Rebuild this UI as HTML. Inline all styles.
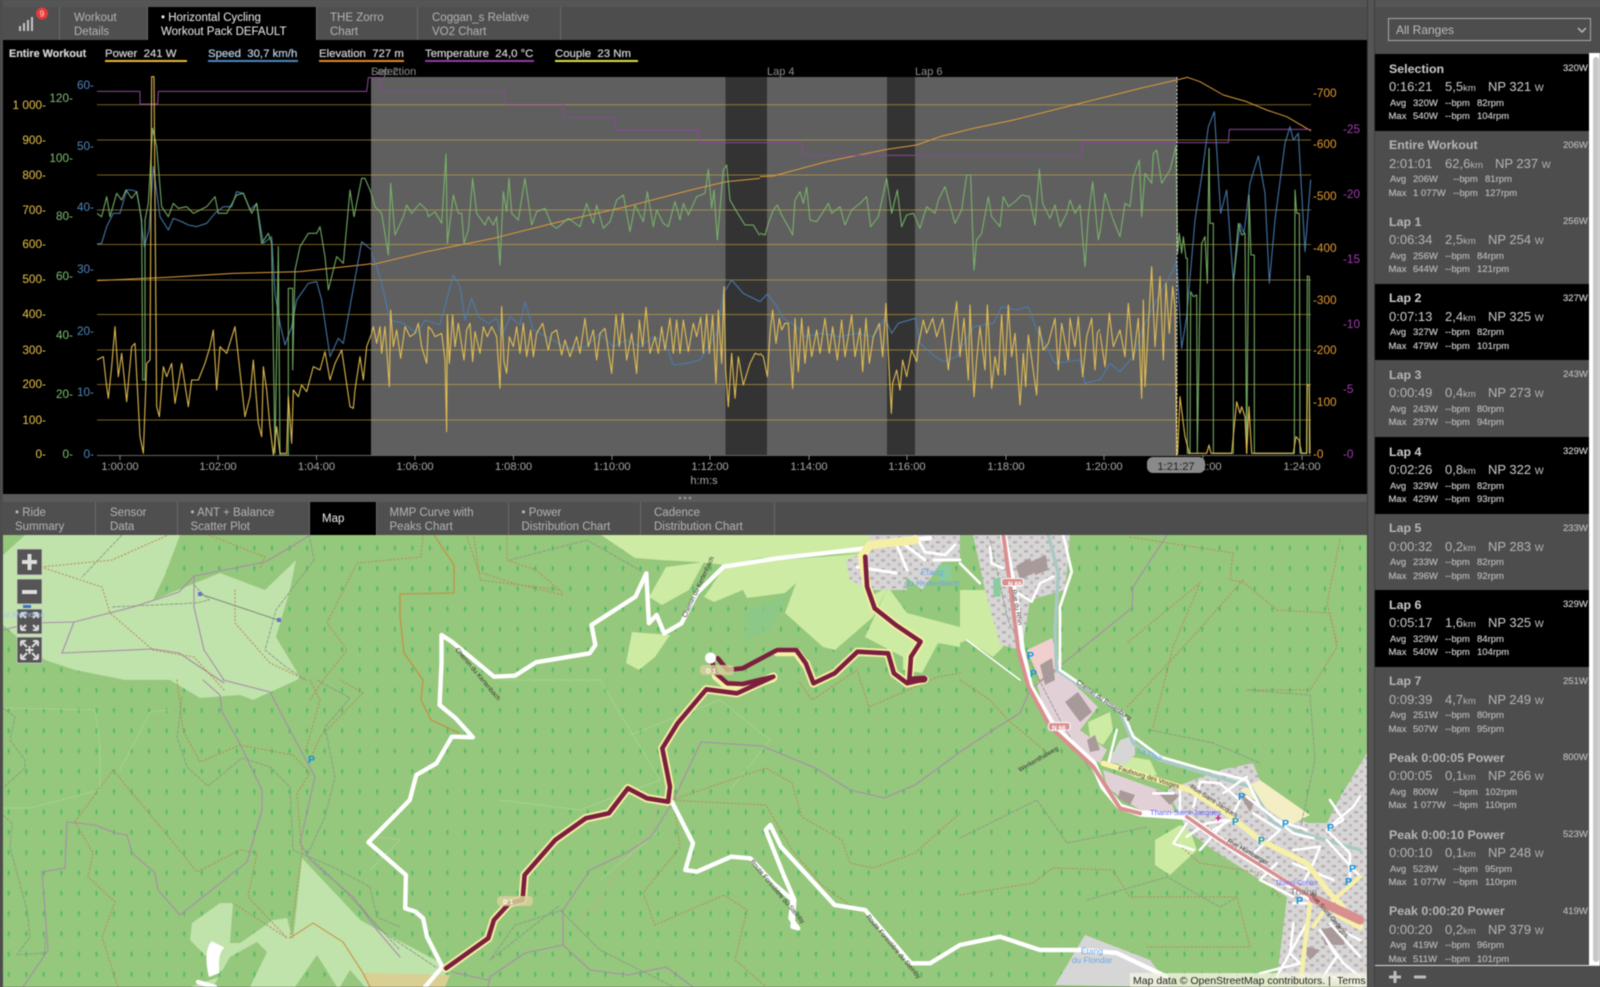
<!DOCTYPE html>
<html><head><meta charset="utf-8"><title>Workout</title>
<style>
html,body{margin:0;padding:0;background:#4d4d4d}
#root{position:relative;width:1600px;height:987px;overflow:hidden;background:#4d4d4d;font-family:"Liberation Sans",sans-serif;filter:blur(.4px)}
#root div,#root span{position:absolute;white-space:pre}
svg{position:absolute;left:0;top:0}
polyline,path,line,polygon,rect{vector-effect:non-scaling-stroke}
polyline{fill:none;stroke-linejoin:round;stroke-linecap:round}
.pw polyline{stroke:#eec654;stroke-width:1.1;stroke-opacity:.92}
.gr polyline{stroke:#7cb96c;stroke-width:1.1;stroke-opacity:.9}
.bl polyline{stroke:#4a80b6;stroke-width:1.1;stroke-opacity:.9}
.el polyline{stroke:#e09a38;stroke-width:1}
.tm polyline{stroke:#8b4899;stroke-width:1}
.tab{top:7px;height:33px;background:#4f4f4f;border-right:1px solid #6a6a6a;box-sizing:border-box;color:#b4b4b4;font-size:11.5px;line-height:14px}
.btab{top:502px;height:33px;background:#4f4f4f;border-right:1px solid #6a6a6a;box-sizing:border-box;color:#b4b4b4;font-size:11.5px;line-height:14px}
.act{background:#000;color:#eee}
.l1{top:3.5px}.l2{top:17.5px}
.lg{top:47px;font-size:11.4px;line-height:14px;color:#d6d6d6;height:14px;text-shadow:0 0 .5px #d6d6d6}
.ul{top:60px;height:1.6px}
.ax{font-size:11.8px;text-anchor:end}
.r{left:1375px;width:214px;height:76.6px;color:#b6b6b6;overflow:hidden}
.b{background:#000;color:#cdcdcd}
.r span{line-height:14px}
.t{left:14px;top:7.6px;font-weight:bold;font-size:12.4px}
.d{top:26px;font-size:13px}
.d i{font-style:normal;font-size:9.5px}
.s{font-size:9.5px;text-shadow:0 0 .4px #b6b6b6}
.a{top:42.6px}.m{top:56px}
svg text{font-family:"Liberation Sans",sans-serif}
.bd{stroke:#b98a55;stroke-width:1;stroke-dasharray:1.3 2.4;fill:none}
.dg{stroke:#8a9a88;stroke-width:.9;stroke-dasharray:3 1.8;fill:none}
.pu{stroke:#a88cab;stroke-width:1.1;fill:none}
.rl{font-size:6.5px;fill:#333}
</style></head><body>
<div id="root">

<!-- top tabs -->
<div style="left:0;top:0;width:1368px;height:7px;background:#555"></div>
<div class="tab" style="left:3px;width:57px">
 <svg width="57" height="33" style="left:0;top:0"><g fill="#c4c4c4"><rect x="16" y="19" width="2" height="5"/><rect x="20" y="16" width="2" height="8"/><rect x="24" y="13" width="2" height="11"/><rect x="28" y="10" width="2" height="14"/></g><circle cx="39" cy="6.5" r="6" fill="#e23b3b"/><text x="39" y="9.5" font-size="8.5" fill="#fbdede" text-anchor="middle">9</text></svg>
</div>
<div class="tab" style="left:60px;width:88px"><span class="l1" style="left:14px">Workout</span><span class="l2" style="left:14px">Details</span></div>
<div class="tab act" style="left:148px;width:169px"><span class="l1" style="left:13px">• Horizontal Cycling</span><span class="l2" style="left:13px">Workout Pack DEFAULT</span></div>
<div class="tab" style="left:317px;width:101px"><span class="l1" style="left:13px">THE Zorro</span><span class="l2" style="left:13px">Chart</span></div>
<div class="tab" style="left:418px;width:143px"><span class="l1" style="left:14px">Coggan_s Relative</span><span class="l2" style="left:14px">VO2 Chart</span></div>

<!-- chart black -->
<div style="left:3px;top:40px;width:1364px;height:454px;background:#000"></div>

<!-- legend -->
<div class="lg" style="left:9px;font-weight:bold;font-size:10.8px">Entire Workout</div>
<div class="lg" style="left:105px">Power&nbsp; 241 W</div><div class="ul" style="left:105px;width:82px;background:#e8b830"></div>
<div class="lg" style="left:208px;color:#bcd3ea;text-shadow:0 0 .5px #bcd3ea">Speed&nbsp; 30,7 km/h</div><div class="ul" style="left:208px;width:90px;background:#4f86bd"></div>
<div class="lg" style="left:319px">Elevation&nbsp; 727 m</div><div class="ul" style="left:319px;width:85px;background:#e08a20"></div>
<div class="lg" style="left:425px">Temperature&nbsp; 24,0 °C</div><div class="ul" style="left:425px;width:109px;background:#8f3fa0"></div>
<div class="lg" style="left:555px">Couple&nbsp; 23 Nm</div><div class="ul" style="left:555px;width:83px;background:#dfe040"></div>

<svg width="1600" height="987" viewBox="0 0 1600 987">
<defs>
<clipPath id="c1"><rect x="97" y="60" width="274" height="396"/></clipPath>
<clipPath id="c2"><rect x="371" y="60" width="389" height="396"/></clipPath>
<clipPath id="c3"><rect x="760" y="60" width="340" height="396"/></clipPath>
<clipPath id="c4"><rect x="1100" y="60" width="212" height="396"/></clipPath>
<clipPath id="mp"><rect x="3" y="535" width="1364" height="452"/></clipPath>
<pattern id="tree" patternUnits="userSpaceOnUse" width="17.55" height="20.3" x="7.2" y="687"><path d="M1.5 0L3 3.6H2.1V6H.9V3.6H0Z" fill="#4abb66"/></pattern>
<pattern id="bld" patternUnits="userSpaceOnUse" width="11" height="9"><rect x="1" y="1" width="4" height="2.5" fill="#bcaeae"/><rect x="7" y="5" width="3" height="3" fill="#c2b6b6"/></pattern>
</defs>

<!-- selection -->
<rect x="371" y="77" width="806" height="378" fill="#5f5f5f"/>
<rect x="725.5" y="77" width="41.5" height="378" fill="#333"/>
<rect x="887" y="77" width="28" height="378" fill="#333"/>
<!-- grid -->
<g stroke="#d8b440" stroke-opacity=".55" stroke-width="1">
<line x1="97" x2="1311" y1="104.7" y2="104.7"/><line x1="97" x2="1311" y1="140" y2="140"/><line x1="97" x2="1311" y1="175" y2="175"/><line x1="97" x2="1311" y1="210" y2="210"/><line x1="97" x2="1311" y1="244.5" y2="244.5"/><line x1="97" x2="1311" y1="280" y2="280"/><line x1="97" x2="1311" y1="314.5" y2="314.5"/><line x1="97" x2="1311" y1="350" y2="350"/><line x1="97" x2="1311" y1="384.5" y2="384.5"/><line x1="97" x2="1311" y1="420" y2="420"/>
</g>
<line x1="97" x2="1311" y1="455.5" y2="455.5" stroke="#666"/>
<g stroke="#888"><line x1="120" x2="120" y1="455" y2="460"/><line x1="218" x2="218" y1="455" y2="460"/><line x1="316.5" x2="316.5" y1="455" y2="460"/><line x1="415" x2="415" y1="455" y2="460"/><line x1="513.5" x2="513.5" y1="455" y2="460"/><line x1="612" x2="612" y1="455" y2="460"/><line x1="710" x2="710" y1="455" y2="460"/><line x1="809" x2="809" y1="455" y2="460"/><line x1="907" x2="907" y1="455" y2="460"/><line x1="1006" x2="1006" y1="455" y2="460"/><line x1="1104" x2="1104" y1="455" y2="460"/><line x1="1203" x2="1203" y1="455" y2="460"/><line x1="1302" x2="1302" y1="455" y2="460"/></g>

<!-- series left -->
<g clip-path="url(#c1)"><g transform="translate(0,70) scale(.33333)">
<g class="el"><polyline points="290,632 500,622 700,610 900,605 1100,583 1200,565"/></g>
<g class="tm"><polyline points="290,64 420,64 420,102 473,102 475,64 1100,64 1105,23 1140,23 1142,64 1200,64"/></g>
<g class="bl"><polyline points="290,522 305,520 320,470 340,430 360,430 380,360 395,360 410,365 420,420 433,530 447,480 460,290 480,440 505,480 520,445 545,455 565,465 590,470 620,460 645,430 670,410 695,410 710,365 730,370 750,420 770,400 790,520 815,500 825,670 840,760 855,825 875,770 890,690 925,640 950,635 965,690 990,860 1015,805 1030,820 1050,710 1085,515 1115,540 1130,590 1170,740 1200,800"/></g>
<g class="gr"><polyline points="290,430 305,440 320,380 330,440 350,370 365,390 378,360 395,385 410,365 425,450 428,930 435,930 435,450 445,400 458,175 470,230 485,410 505,440 520,400 535,415 560,410 580,430 620,410 645,380 655,430 680,430 710,375 730,370 755,430 770,400 785,520 805,490 815,520 825,1150 835,530 840,1155 865,1155 865,655 878,655 878,900 885,600 900,530 925,490 950,490 960,470 975,560 985,660 1010,560 1030,580 1050,360 1062,440 1085,325 1095,325 1110,360 1130,420 1145,430 1165,560 1175,335 1190,490 1200,460"/></g>
<g class="pw"><polyline points="290,870 310,860 320,950 325,985 335,890 345,770 355,920 365,850 380,995 395,830 405,820 420,1100 430,1150 440,880 450,870 455,20 462,20 470,1010 478,1040 490,890 500,920 515,880 525,1000 545,880 565,1010 575,930 595,930 615,880 630,830 640,780 650,960 660,830 680,850 705,770 720,905 735,1040 750,980 760,870 775,1060 785,1100 790,890 800,960 810,1070 820,1155 830,1070 840,1150 860,1150 865,980 875,1120 880,960 895,980 905,945 920,965 940,890 960,900 975,845 990,930 1005,880 1025,840 1050,1010 1060,1015 1065,960 1080,860 1090,930 1100,830 1115,790 1130,800"/></g>
</g></g>
<!-- series mid -->
<g clip-path="url(#c2)"><g transform="translate(360,70) scale(.33333)">
<g class="el"><polyline points="0,583 40,583 200,545 400,505 600,455 800,410 1000,358 1100,335 1200,325"/></g>
<g class="tm"><polyline points="0,64 20,64 25,23 60,23 62,64 435,64 437,102 610,102 612,142 765,142 767,180 1015,180 1018,218 1200,218"/></g>
<g class="bl"><polyline points="0,550 10,515 30,540 50,590 65,640 90,750 130,760 170,790 195,750 240,765 280,615 300,650 315,750 335,685 355,740 385,760 410,745 425,800 450,740 480,765 495,695 520,780 560,800 620,835 680,830 720,790 760,830 800,810 840,830 880,800 915,815 940,885 980,880 1020,870 1040,840 1070,790 1090,670 1115,630 1150,670 1200,695"/></g>
<g class="gr"><polyline points="0,370 10,325 20,350 35,375 45,410 65,430 85,555 92,340 105,495 130,440 140,405 155,430 180,400 200,420 205,440 225,425 245,460 258,252 262,520 280,375 295,430 305,430 312,520 325,480 338,325 350,430 375,465 385,440 400,465 410,440 420,585 430,365 440,425 447,325 455,430 475,450 495,325 515,465 530,425 555,415 575,465 590,475 625,445 660,470 680,400 700,460 710,405 730,475 750,455 770,390 790,375 810,485 825,405 850,455 862,365 880,470 890,420 910,460 925,470 945,395 960,450 970,400 985,435 1010,380 1035,370 1045,298 1055,415 1062,360 1072,510 1090,300 1100,285 1110,390 1130,425 1155,465 1180,465 1198,495"/></g>
<g class="pw"><polyline points="20,835 40,770 50,820 60,770 65,850 75,770 88,950 92,720 100,830 110,780 122,865 135,770 150,800 165,790 175,760 185,830 200,880 205,770 215,780 225,800 245,790 255,870 260,1085 262,735 268,880 278,735 285,830 295,760 312,870 320,780 330,760 338,875 345,785 360,850 370,770 382,800 395,770 410,800 420,955 425,710 432,875 440,910 448,800 460,830 470,770 480,850 490,760 500,860 512,780 520,860 530,790 548,760 565,840 575,790 590,780 605,855 615,810 630,860 650,800 660,850 675,745 685,830 700,780 710,870 720,790 735,775 755,910 768,735 778,830 788,730 800,870 815,790 830,910 838,750 848,830 858,712 870,850 885,800 895,850 905,770 915,840 930,745 940,850 950,750 960,850 970,750 985,845 1000,760 1010,800 1022,742 1030,850 1040,732 1048,850 1058,735 1068,940 1075,720 1085,880 1092,650 1097,900 1105,1010 1115,850 1125,985 1135,860 1150,945 1170,880 1185,850 1200,855"/></g>
</g></g>
<g clip-path="url(#c3)"><g transform="translate(760,70) scale(.33333)">
<g class="el"><polyline points="0,320 40,318 200,275 380,238 470,225 540,200 640,175 760,150 940,105 1020,85 1200,42"/></g>
<g class="tm"><polyline points="0,218 125,218 128,256 965,256 968,218 1200,218"/></g>
<g class="bl"><polyline points="0,695 22,672 48,705 70,745 110,770 135,800 180,790 240,800 290,790 340,800 375,745 395,790 415,760 465,745 480,820 520,855 550,875 590,860 640,770 700,760 725,710 770,720 805,710 830,780 860,830 885,880 960,870 975,940 1015,930 1050,885 1085,905 1120,860 1140,800 1150,760 1200,770"/></g>
<g class="gr"><polyline points="0,490 15,495 25,460 40,420 52,405 65,435 85,470 98,495 105,390 120,365 130,400 140,352 150,450 170,455 190,425 205,400 215,430 240,410 255,465 275,420 300,400 320,380 332,470 355,440 380,325 395,430 412,360 425,470 440,435 460,430 480,475 500,410 525,430 535,390 555,350 585,460 605,420 620,315 632,315 642,600 650,510 665,490 685,380 695,440 720,470 730,380 745,410 765,395 785,375 808,380 825,465 838,298 848,400 870,445 885,405 900,470 920,430 930,390 945,430 960,405 975,590 985,440 998,335 1015,510 1035,410 1058,450 1085,500 1095,395 1110,425 1120,320 1135,265 1147,440 1155,300 1170,330 1180,240 1195,300"/></g>
<g class="pw"><polyline points="0,850 10,860 22,920 30,790 38,720 48,820 58,745 65,780 75,760 85,760 98,955 105,745 115,905 125,745 135,880 145,770 155,860 170,780 180,850 195,745 208,850 218,770 232,870 245,750 255,860 275,735 285,860 300,775 308,905 318,745 328,880 340,800 358,760 368,860 378,700 385,850 394,1030 398,940 410,900 420,960 428,870 440,920 455,840 470,875 475,825 490,750 500,790 518,745 530,800 548,745 565,900 575,810 590,695 600,860 612,745 625,930 630,705 642,980 650,870 660,770 675,900 682,705 695,955 705,860 715,915 725,735 735,915 745,705 755,860 765,790 780,1005 790,850 797,950 805,795 830,975 838,770 850,840 865,820 885,745 895,900 905,760 925,870 930,745 945,830 955,740 968,920 980,800 995,745 1005,900 1012,790 1025,770 1040,900 1050,730 1060,890 1075,790 1085,900 1100,700 1108,880 1118,645 1128,850 1135,740 1145,985 1150,690 1158,955 1165,700 1175,590 1180,870 1190,590 1200,720"/></g>
</g></g>
<g clip-path="url(#c4)"><g transform="translate(1100,70) scale(.33333)">
<g class="el"><polyline points="0,85 120,55 230,30 262,22 300,35 370,75 440,95 500,120 560,140 632,182"/></g>
<g class="tm"><polyline points="0,218 385,218 388,178 632,178"/></g>
<g class="bl"><polyline points="0,930 30,880 60,905 100,860 130,770 175,680 220,600 230,570 245,835 260,740 285,450 305,320 325,170 343,125 362,430 380,360 400,635 420,460 432,490 450,340 475,258 495,370 508,640 525,450 555,220 570,170 580,210 595,190 615,545 632,330"/></g>
<g class="gr"><polyline points="0,490 15,370 30,420 40,450 60,500 75,400 90,410 100,320 118,270 125,440 135,310 155,340 160,250 170,240 185,340 210,300 228,228 233,550 238,490 245,550 250,500 258,565 262,565 262,1150 270,1150 272,665 280,680 290,675 292,1150 300,670 305,520 315,500 322,640 327,235 330,460 340,460 340,1150 400,1150 400,640 415,460 425,495 435,490 440,1150 447,375 453,555 463,555 463,1150 583,1150 585,360 590,430 598,430 600,1150 620,1150 622,618 628,620 628,1150"/></g>
<g class="pw"><polyline points="0,790 15,890 28,730 40,830 60,780 75,860 85,700 100,870 115,745 125,985 130,690 135,950 155,590 165,830 180,620 190,870 198,640 208,790 218,650 225,710 230,1155 233,1150 240,980 255,1100 268,1150 320,1150 327,1125 333,1150 395,1150 410,995 420,1030 425,1010 435,1040 440,1150 447,1010 455,1150 580,1150 588,1100 597,1110 605,1150 620,1150 622,945 628,945 630,1150"/></g>
</g></g>
<line x1="1177" x2="1177" y1="77" y2="455" stroke="#ddd" stroke-dasharray="2 2"/>

<!-- axes -->
<g class="ax" fill="#e8c34a">
<text x="46" y="109">1 000-</text><text x="46" y="144">900-</text><text x="46" y="179">800-</text><text x="46" y="214">700-</text><text x="46" y="248">600-</text><text x="46" y="283">500-</text><text x="46" y="318">400-</text><text x="46" y="354">300-</text><text x="46" y="388">200-</text><text x="46" y="424">100-</text><text x="46" y="458">0-</text></g>
<g class="ax" fill="#7cc06e">
<text x="73" y="102">120-</text><text x="73" y="162">100-</text><text x="73" y="220">80-</text><text x="73" y="280">60-</text><text x="73" y="339">40-</text><text x="73" y="398">20-</text><text x="73" y="458">0-</text></g>
<g class="ax" fill="#4f86bd">
<text x="94" y="89">60-</text><text x="94" y="150">50-</text><text x="94" y="211">40-</text><text x="94" y="273">30-</text><text x="94" y="335">20-</text><text x="94" y="396">10-</text><text x="94" y="458">0-</text></g>
<g font-size="11.8" fill="#e59a30">
<text x="1313" y="97">-700</text><text x="1313" y="148">-600</text><text x="1313" y="200">-500</text><text x="1313" y="252">-400</text><text x="1313" y="304">-300</text><text x="1313" y="354">-200</text><text x="1313" y="406">-100</text><text x="1313" y="458">-0</text></g>
<g font-size="11.8" fill="#a03fb0">
<text x="1343" y="133">-25</text><text x="1343" y="198">-20</text><text x="1343" y="263">-15</text><text x="1343" y="328">-10</text><text x="1343" y="393">-5</text><text x="1343" y="458">-0</text></g>
<g font-size="11.2" fill="#aaa" text-anchor="middle">
<text x="120" y="470">1:00:00</text><text x="218" y="470">1:02:00</text><text x="316.5" y="470">1:04:00</text><text x="415" y="470">1:06:00</text><text x="513.5" y="470">1:08:00</text><text x="612" y="470">1:10:00</text><text x="710" y="470">1:12:00</text><text x="809" y="470">1:14:00</text><text x="907" y="470">1:16:00</text><text x="1006" y="470">1:18:00</text><text x="1104" y="470">1:20:00</text><text x="1203" y="470">1:22:00</text><text x="1302" y="470">1:24:00</text><text x="704" y="484">h:m:s</text></g>
<rect x="1147" y="457" width="58" height="16" rx="6" fill="#8a8a8a"/>
<text x="1176" y="470" font-size="11.2" fill="#222" text-anchor="middle">1:21:27</text>
<g font-size="11" fill="#8f8f8f"><text x="371" y="75">Selection</text><text x="371" y="75" fill="#7c7c7c">Lap 2</text><text x="767" y="75">Lap 4</text><text x="915" y="75">Lap 6</text></g>

<!-- MAP -->
<g clip-path="url(#mp)">
<rect x="3" y="535" width="1364" height="452" fill="#95c77c"/>
<rect x="3" y="535" width="1364" height="452" fill="url(#tree)"/>
<!-- faint forest outlines -->
<g fill="none" stroke="#a6d28f" stroke-width="1"><polyline points="3,708 95,710 100,745 100,790 30,808 3,808"/><polyline points="120,770 150,712 170,710"/><polyline points="370,870 400,840 365,835"/><polyline points="500,680 600,680 660,780 580,810 500,800"/><polyline points="600,880 660,830"/><polyline points="630,735 720,700 770,740 730,790"/></g>
<!-- meadows -->
<g fill="#c0e2ab">
<polygon points="3,535 180,535 165,575 153,600 220,573 265,590 296,560 290,590 276,637 300,677 297,680 253,700 240,695 200,698 170,680 125,680 75,670 45,660 3,625"/>
<polygon points="190,940 192,923 220,903 233,903 230,943 240,943 273,920 287,918 293,940 302,858 367,927 400,953 440,967 398,987 190,987 225,975"/>
<polygon points="360,920 445,965 445,975 398,987 360,987"/>
</g>
<g fill="#95c77c"><polygon points="3,535 25,535 3,555"/><polygon points="230,957 257,942 267,952 250,987 213,987"/><polygon points="295,987 317,955 337,987"/><polygon points="340,987 350,970 365,987"/></g>
<g fill="url(#tree)"><polygon points="230,957 257,942 267,952 250,987 213,987"/><polygon points="295,987 317,955 337,987"/></g>
<polygon points="363,973 450,975 445,987 370,987" fill="#d9cf92"/>
<g fill="#cdeba2">
<polygon points="601,535 880,535 880,552 760,558 725,565 697,562 660,560 635,558"/>
<polygon points="666,567 704,562 689,590 662,605 649,597"/>
<polygon points="704,597 727,563 781,560 869,553 869,597 888,587 873,617 835,650 823,647 785,613 796,583 785,593 747,598 743,590 714,602"/>
<polygon points="865,637 888,587 907,613 960,627 960,647 938,643 922,673 903,670 903,657"/>
<polygon points="632,632 670,635 655,657 639,670 626,663"/>
<polygon points="960,590 985,590 1003,647 993,657 967,640 960,643"/>
<polygon points="1155,840 1180,825 1190,830 1197,850 1170,875 1155,865"/>
<polygon points="1088,722 1110,712 1113,730 1103,745 1090,738"/>
<polygon points="1118,755 1150,760 1157,775 1137,778 1120,770"/>
</g>
<polygon points="745,610 775,600 790,590 770,630 745,640" fill="#8bc98a" opacity=".7"/>
<!-- town -->
<g fill="#d6d6d6">
<polygon id="t1" points="870,535 960,535 960,560 942,562 922,590 890,563 870,553"/>
<polygon points="846,560 880,545 905,560 907,590 870,590 850,580"/>
<polygon points="973,535 1070,535 1065,590 1030,600 1022,650 1000,645 985,590"/>
<polygon points="1167,790 1220,770 1253,763 1267,797 1307,823 1327,823 1340,797 1367,753 1367,987 1277,977 1287,897 1213,850 1187,830"/>
<polygon points="1055,985 1085,935 1150,960 1170,987"/>
<polygon points="1120,740 1135,735 1135,755 1125,765 1108,762"/>
</g>
<g fill="url(#bld)">
<polygon points="870,535 960,535 960,560 942,562 922,590 890,563 870,553"/>
<polygon points="846,560 880,545 905,560 907,590 870,590 850,580"/>
<polygon points="973,535 1070,535 1065,590 1030,600 1022,650 1000,645 985,590"/>
<polygon points="1167,790 1220,770 1253,763 1267,797 1307,823 1327,823 1340,797 1367,753 1367,987 1277,977 1287,897 1213,850 1187,830"/>
</g>
<polygon points="938,565 951,565 951,580 938,580" fill="#8acca0"/>
<polygon points="1036.7,683 1060,670 1098,707 1080,730 1107,750 1100,763 1073,750 1047,720" fill="#e2d0d7"/>
<polygon points="1103,770 1167,793 1177,817 1140,810 1120,797 1107,787" fill="#e2d0d7"/>
<polygon points="1027,650 1052,638 1060,665 1040,680" fill="#f2cfcf"/>
<polygon points="1260,780 1310,815 1290,825 1240,790" fill="#f3eec4"/>
<!-- buildings -->
<g fill="#a99a9a">
<polygon points="1016,566 1030,558 1035,572 1020,580"/><polygon points="1030,562 1046,555 1048,570 1035,575"/>
<polygon points="1040,665 1052,658 1055,680 1045,685"/><polygon points="1065,702 1078,692 1092,712 1080,722"/>
<polygon points="1087,740 1095,735 1100,750 1090,752"/><polygon points="1120,790 1135,795 1130,805 1118,798"/>
<polygon points="1155,790 1180,795 1170,805"/>
<polygon points="1300,945 1320,950 1310,960"/><polygon points="1320,930 1340,925 1345,945 1325,945"/><polygon points="1240,795 1255,800 1250,812"/>
</g>
<!-- trails -->
<g>
<polyline class="pu" points="3,630 31,623 74,622 133,607 179,592 194,576 265,562 291,547 310,535"/>
<polyline class="pu" points="74,622 62,653 153,649 179,653 224,683"/>
<polyline class="pu" points="203,680 220,695 222,712 238,740 262,790 262,810 247,862 180,915 158,890 155,873 132,853 127,835 115,833 95,825 67,822 65,868 42,872 48,950 23,987"/>
<polyline class="pu" points="223,680 270,692 283,717 315,777 300,843 310,860 353,897 377,930 400,957"/>
<polyline class="pu" points="194,576 194,607 204,650 224,680"/>
<polyline class="pu" points="563,945 563,910 590,870 626,853 651,837 672,803 701,742 762,746 815.5,768 850,790 884,798 915,785 960,752 993,730 1020,713 1030,690 1132,608 1133,587 1167,535"/>
<polyline class="pu" points="563,945 525,953 490,977 488,987"/><polyline class="pu" points="452,972 488,980"/><polyline class="pu" points="563,945 590,970 628,975 666,967 693,987"/>
<polyline points="200,594 278,620" stroke="#7f8f7f" stroke-width="1"/><rect x="198" y="592" width="4" height="4" fill="#6a6ad0"/><rect x="277" y="618" width="4" height="4" fill="#6a6ad0"/>
<polyline points="434,535 454,565 454,593 400,594 400,617 404,653 423,680 421,700 431,720 459,733" stroke="#cc8a38" stroke-width="1.1"/>
<polyline points="290,938 313,923 343,942 363,973 370,987" stroke="#cc8a38" stroke-width="1"/>
<g>
<polyline class="bd" points="41,567 112,560 168,535"/><polyline class="bd" points="41,567 102,587 110,613 153,650 194,657 224,690"/>
<polyline class="bd" points="235,590 235,623 270,663 306,680"/><polyline class="bd" points="209,535 265,557 260,568"/>
<polyline class="bd" points="423,535 421,557 357,563 327,623 347,650 321,683 310,700"/><polyline class="bd" points="474,537 480,580 561,590"/>
<polyline class="bd" points="113,770 75,822"/><polyline class="bd" points="113,770 163,830 197,872 240,850 257,853 248,897 287,938 233,903"/>
<polyline class="bd" points="75,822 93,853 88,877 115,902 102,937 118,987"/>
<polyline class="bd" points="177,680 183,730 200,762 240,745 293,755 310,773 297,793 302,853 290,938"/>
<polyline class="bd" points="363,693 340,680"/><polyline class="bd" points="363,693 320,737 310,760"/><polyline class="bd" points="310,680 320,700 305,753"/>
<polyline class="bd" points="467,537 479,572 513,583 563,595"/><polyline class="bd" points="507,535 507,560 536,570 563,593"/>
<polyline class="bd" points="672,800 766,768 792,783 802,817 842,840 850,863 873,868 915,853 960,813"/>
<polyline class="bd" points="672,800 704,802 766,805 792,850 822,885 850,905"/>
<polyline class="bd" points="674,803 680,847 643,893 655,925 724,895 747,910 735,960 766,987"/>
<polyline class="bd" points="800,683 812,700 857,670 869,707 938,677 960,673"/>
<polyline class="bd" points="1153,727 1173,647 1200,583 1127,643"/><polyline class="bd" points="1243,580 1187,643 1127,707"/>
<polyline class="bd" points="1130,537 1233,553 1230,580 1243,582 1277,610 1330,613 1337,647 1310,690 1247,690"/>
<polyline class="bd" points="1340,540 1327,603 1337,643"/>
<polyline class="bd" points="960,895 1033,883 1053,868 1113,870 1130,897 1237,897 1250,947 1147,947"/>
<polyline class="bd" points="1177,843 1200,863 1260,873 1280,897"/>
<polyline class="bd" points="960,680 990,700 1008,720 1050,755"/>
<polyline class="bd" points="580,920 600,900 620,870 650,830 660,800" style="stroke:#d9a59a"/>
<polyline class="dg" points="3,708 15,717 10,740 25,760 25,768 3,788"/>
<polyline class="dg" points="3,815 12,823 10,847 27,910 30,937 17,955 45,953 45,937"/>
<polyline class="dg" points="182,697 177,737 187,767 208,786 242,758 270,767 290,787 293,850 333,867 370,887 377,917 400,927"/>
<polyline class="dg" points="317,680 350,698 325,727 335,777 325,817 308,853"/><polyline class="dg" points="310,857 347,893 400,950"/>
<polyline class="dg" points="122,535 82,577"/><polyline class="dg" points="194,585 209,600 196,603 112,607"/>
<polyline class="dg" points="309,535 314,560 276,610 265,650 286,667 306,680"/><polyline class="dg" points="510,560 587,540 643,572"/>
<polyline class="dg" points="1150,730 1213,743 1260,763"/><polyline class="dg" points="960,838 1037,800 1067,843 1147,827"/>
<polyline class="dg" points="1087,900 1167,877 1220,907 1237,897"/><polyline class="dg" points="360,905 380,930 440,970"/>
<polyline class="dg" points="560,910 600,950 680,990"/><polyline class="dg" points="563,910 515,925 490,960 560,905"/>
<polyline class="dg" points="990,540 1008,620 1060,720 1090,770"/>
<polyline class="dg" points="1247,690 1310,695 1315,760 1300,830"/>
</g>
</g>
<!-- river -->
<g transform="translate(960,530) scale(.33333)">
<polyline points="265,15 295,130 285,300 290,420 480,545 520,640 600,690 700,720 870,770 940,880 1060,920 1200,960" stroke="#a9c9c4" stroke-width="3.5"/>
<polyline points="310,15 335,125 300,230 300,420 490,550 520,620 600,680 720,715 860,750 900,830 1000,910 1060,925" stroke="#fff" stroke-width="2.8"/>
<!-- streets -->
<g stroke="#fff" stroke-width="2.6">
<polyline points="90,50 95,100 130,115"/><polyline points="175,190 215,215 240,160 280,140"/><polyline points="0,100 60,160"/><polyline points="470,600 445,700"/>
<polyline points="720,755 780,760 840,810 810,870 760,900"/><polyline points="660,780 660,860"/><polyline points="720,760 700,830"/><polyline points="580,790 640,790"/>
<polyline points="880,850 960,900 880,970"/><polyline points="680,920 740,880 800,870 720,960"/><polyline points="1000,960 1080,950 1060,1000 1030,1060"/>
<polyline points="1110,810 1150,870 1100,900 1170,970 1170,1040"/><polyline points="1200,1040 1100,930"/><polyline points="1040,1180 950,1340"/><polyline points="1050,1120 1000,1120"/>
<polyline points="1110,1180 1200,1280"/><polyline points="1080,1200 1150,1300 1200,1340"/><polyline points="900,1330 1020,1300"/><polyline points="1120,1340 1200,1371"/>
<polyline points="860,800 950,870 1040,900"/><polyline points="1000,1000 1120,1050"/>
<polyline points="950,1000 900,1050 1000,1100"/><polyline points="1000,1180 990,1270 1030,1310"/><polyline points="1100,1230 1130,1280 1090,1340"/><polyline points="1140,1200 1200,1230"/>
<polyline points="790,790 860,740"/><polyline points="1120,880 1180,830 1200,800"/><polyline points="680,880 640,940 700,960"/>
<polyline points="20,330 180,450" stroke-width="1.5"/>
</g>
<!-- yellow roads -->
<g stroke="#f7f0a8"><polyline points="430,700 690,780 800,850 900,930 1040,1000 1110,1090 1150,1130" stroke-width="5.5"/>
<polyline points="1050,1120 1020,1371" stroke-width="4.5"/><polyline points="1200,1040 1100,1130 1060,1190" stroke-width="4"/><polyline points="1130,1150 1200,1190" stroke-width="7"/></g>
<!-- red road -->
<polyline points="130,15 165,200 185,360 210,470 280,590 400,700 430,770 480,830 540,850 680,860 780,930 1060,1110 1200,1170" stroke="#fff" stroke-width="6.5"/>
<polyline points="130,15 155,200 175,360 205,470 270,590 400,710 480,835 540,850" stroke="#d98f8f" stroke-width="4"/>
<polyline points="680,860 780,930 1060,1105" stroke="#d98f8f" stroke-width="3.5"/><polyline points="1060,1105 1200,1170" stroke="#d98f8f" stroke-width="9"/>
<rect x="125" y="145" width="65" height="23" rx="8" fill="#d98f8f" stroke="#fff"/><rect x="265" y="578" width="65" height="23" rx="8" fill="#d98f8f" stroke="#fff"/>
<rect x="100" y="145" width="22" height="55" fill="#8acca0"/>
</g>
<text x="1008" y="586" font-size="6.5" fill="#fff" font-weight="bold">N 66</text><text x="1052" y="730" font-size="6.5" fill="#fff" font-weight="bold">N 66</text>
<!-- white route A & B -->
<g stroke="#fff" stroke-width="4.4">
<polyline points="442.3,966.7 427,936.7 423.1,918.3 415.5,911.7 405.2,908.3 405.9,875 368.4,842.3 409.8,800 416.3,775 436.5,763.3 451.8,736.7 472.9,737.3 455.7,718.3 439.6,705 441.5,663.3 441.5,635 451.8,641.7 494,676.7 515,675.7 536,662.3 589.6,653.3 595.4,645 591.5,625 635.5,596.7 646.3,573.3 648.9,623.3 656.6,615 664.2,633.3 681.5,623.3 696.8,593.3 723.6,566.7 777.1,558.3 823,553.3 865.2,548.3 884.3,541.7 930.2,538"/>
<polyline points="671.9,801.7 693,843.3 685.3,870 696.8,871.7 731.2,856.7 750.4,858.3 773.3,883.3 792.5,900 790.5,918.3 798.2,928.3 792.5,926.7 794.4,900 782.9,873.3 765.7,830 770.3,825 781,846.7 834.6,905 865.2,910 911,963.3 930.2,963.3 960,945 1000,936.7 1040,950 1083,950 1116.7,953 1166.7,976.7"/>
<polyline points="442,967 425,987"/>
<path d="M212 943Q205 953 210 975L218 972Q216 955 222 948Z" fill="#fff" stroke-width="3"/><polyline points="198,982 215,987"/>
<polyline points="915,535 925,552 945,555 955,545" stroke-width="3"/><polyline points="905,545 925,560" stroke-width="3"/>
<polyline points="896,543 903,560 907,570" stroke-width="3"/><polyline points="857,567 896,573" stroke-width="3"/><polyline points="934,560 960,560" stroke-width="3"/>
</g>
<!-- route casing -->
<g stroke="#f5efa6" stroke-width="8.5">
<polyline points="446.1,968.3 488.2,938.3 493.9,920 509.3,903.3 522.6,900 524.6,875 555.2,840 585.8,818.3 608.8,813.3 627.9,788.3 647,798.3 668.1,801.7 670,786.7 662.3,748.3 677.6,723.3 706.3,689.3 737,693.3 773.3,676.7"/>
<polyline points="773,678 742.7,688 727.4,686 715.9,676"/>
<polyline points="805.8,663.3 813.5,683.3 834.6,673.3 857.5,651.7 888.1,653.3 893.9,673.3 907.3,683.3 924.5,679.3"/>
<polyline points="777,652 796.3,652 805.8,665"/>
<polyline points="909,681 911,657 920.6,641.7 895.8,625 874.7,608.3 867.1,586.7 862,556 870,545 915,540"/>
</g>
<g stroke="#7b1f3e" stroke-width="4.6">
<polyline points="446.1,968.3 488.2,938.3 493.9,920 509.3,903.3 522.6,900 524.6,875 555.2,840 585.8,818.3 608.8,813.3 627.9,788.3 647,798.3 668.1,801.7 670,786.7 662.3,748.3 677.6,723.3 706.3,689.3 737,693.3 773.3,676.7 742.7,684 727.4,683.3 715.9,673.3 710.9,658.3"/>
<polyline points="717.8,658.3 727.4,670 742.7,668.3 777.1,650 796.3,650 805.8,663.3 813.5,683.3 834.6,673.3 857.5,651.7 888.1,653.3 893.9,673.3 907.3,683.3 924.5,679.3"/>
<polyline points="909.2,681.7 911,656.7 920.6,641.7 895.8,625 874.7,608.3 867.1,586.7 865.2,556.7"/>
<polyline points="912,680 924,679" stroke-width="7"/>
</g>
<circle cx="710.5" cy="658" r="5.5" fill="#fff"/>
<rect x="700" y="665" width="34" height="10" rx="4" fill="#d8cf9c" opacity=".8"/><text x="706" y="673" font-size="6.5" fill="#fff" font-weight="bold">D 1</text>
<rect x="497" y="896" width="36" height="10" rx="4" fill="#d8cf9c" opacity=".85"/><text x="503" y="904" font-size="6.5" fill="#fff" font-weight="bold">D 1</text>
<!-- labels -->
<g font-size="10.5" font-weight="bold" fill="#0a92e0">
<text x="1027" y="659">P</text><text x="1030" y="677">P</text><text x="1238" y="800">P</text><text x="1232" y="825">P</text><text x="1258" y="844">P</text><text x="1282" y="827">P</text><text x="1327" y="831">P</text><text x="1349" y="872">P</text><text x="1345" y="885">P</text><text x="1296" y="904">P</text><text x="308" y="763">P</text></g>
<text x="1150" y="815" font-size="7.5" fill="#6060ff">Thann-Saint-Jacques</text><text x="1275" y="885" font-size="7" fill="#7070ff">Thann-Centre</text>
<text x="1290" y="895" font-size="9.5" fill="#777">Thann</text>
<text x="1215" y="822" font-size="11" fill="#d0108a" font-weight="bold">+</text>
<text x="932" y="575" font-size="8.5" fill="#6aa8e8" text-anchor="middle">Étang</text><text x="932" y="586" font-size="8.5" fill="#6aa8e8" text-anchor="middle">du Kertenbach</text>
<text x="1092" y="954" font-size="8.5" fill="#6aa8e8" text-anchor="middle">Étang</text><text x="1092" y="963" font-size="8.5" fill="#6aa8e8" text-anchor="middle">du Flondar</text>
<text x="1137" y="752" font-size="7.5" fill="#6aa8e8" transform="rotate(20 1137 752)">La Thur</text>
<text x="455" y="650" class="rl" transform="rotate(50 455 650)">Chemin du Kertenbach</text>
<text x="686" y="618" class="rl" transform="rotate(-65 686 618)">Chemin du Kertenbach</text>
<text x="750" y="862" class="rl" transform="rotate(50 750 862)">Route Forestière du Steinby</text>
<text x="866" y="917" class="rl" transform="rotate(50 866 917)">Route Forestière du Steinby</text>
<text x="1012" y="590" class="rl" transform="rotate(80 1012 590)">Rue du Rhin</text>
<text x="1118" y="770" class="rl" transform="rotate(17 1118 770)">Faubourg des Vosges</text>
<text x="1190" y="788" class="rl" transform="rotate(33 1190 788)">Rue Saint-Jacques</text>
<text x="1076" y="683" class="rl" transform="rotate(35 1076 683)">Chemin du Rosenburg</text>
<text x="1020" y="772" class="rl" transform="rotate(-30 1020 772)">Werkenthalweg</text>
<text x="1227" y="842" class="rl" transform="rotate(30 1227 842)">Rue Humberger</text>
<text x="1310" y="895" class="rl" transform="rotate(50 1310 895)">Rue Saint-Georges</text>
<rect x="1130" y="973" width="238" height="14" fill="#f3f3df" fill-opacity=".78"/>
<text x="1133" y="984" font-size="10.5" fill="#222">Map data © OpenStreetMap contributors. |</text><text x="1337" y="984" font-size="10.5" fill="#222">Terms</text>
</g>
<!-- zoom controls -->
<g stroke="#cfcfcf" stroke-width=".7" fill="#555">
<rect x="17" y="549" width="25" height="26"/><rect x="17" y="579" width="25" height="25"/><rect x="17" y="609" width="25" height="25"/><rect x="17" y="637" width="25" height="26"/></g>
<g fill="#ddd"><rect x="22" y="560" width="15" height="4"/><rect x="27.5" y="554" width="4" height="16"/><rect x="22" y="590" width="15" height="4"/></g>
<g stroke="#ddd" stroke-width="2" fill="none"><path d="M21 613L26 618M21 613V618M21 613H26M38 613L33 618M38 613V618M38 613H33M21 630L26 625M21 630V625M21 630H26M38 630L33 625M38 630V625M38 630H33"/>
<path d="M21 641L27 647M21 641V646M21 641H26M38 641L32 647M38 641V646M38 641H33M21 659L27 653M21 659V654M21 659H26M38 659L32 653M38 659V654M38 659H33M29.5 646V654M25.5 650H33.5"/></g>
<rect x="23" y="605" width="8" height="3" fill="#3a6fc8"/>
<text x="4" y="617" font-size="7" fill="#a8c4f0">at Wolfhouse</text>
</svg>

<!-- resizer -->
<div style="left:0;top:494px;width:1368px;height:8px;background:#5a5a5a"></div>
<svg width="1600" height="987" style="pointer-events:none"><g fill="#999"><circle cx="680" cy="498" r="1.3"/><circle cx="685" cy="498" r="1.3"/><circle cx="690" cy="498" r="1.3"/></g></svg>
<div style="left:0;top:0;width:3px;height:987px;background:#4d4d4d"></div>

<!-- bottom tabs -->
<div class="btab" style="left:3px;width:93px"><span class="l1" style="left:12px">• Ride</span><span class="l2" style="left:12px">Summary</span></div>
<div class="btab" style="left:96px;width:81.5px"><span class="l1" style="left:14px">Sensor</span><span class="l2" style="left:14px">Data</span></div>
<div class="btab" style="left:177.5px;width:132.5px"><span class="l1" style="left:13px">• ANT + Balance</span><span class="l2" style="left:13px">Scatter Plot</span></div>
<div class="btab act" style="left:310px;width:66.5px"><span style="left:12px;top:10px">Map</span></div>
<div class="btab" style="left:376.5px;width:132px"><span class="l1" style="left:13px">MMP Curve with</span><span class="l2" style="left:13px">Peaks Chart</span></div>
<div class="btab" style="left:508.5px;width:132.5px"><span class="l1" style="left:13px">• Power</span><span class="l2" style="left:13px">Distribution Chart</span></div>
<div class="btab" style="left:641px;width:133.5px"><span class="l1" style="left:13px">Cadence</span><span class="l2" style="left:13px">Distribution Chart</span></div>

<!-- sidebar -->
<div style="left:1367px;top:0;width:233px;height:987px;background:#4d4d4d"></div>
<div style="left:1367px;top:0;width:1px;height:987px;background:#3c3c3c"></div>
<div style="left:1374px;top:0;width:1px;height:987px;background:#3c3c3c"></div>
<div style="left:1368px;top:0;width:6px;height:987px;background:#555"></div>
<div style="left:1375px;top:0;width:225px;height:7px;background:#555"></div>
<div style="left:1388px;top:18px;width:203px;height:23px;border:1px solid #a8a8a8;box-sizing:border-box;color:#bbb;font-size:12px;line-height:23px"><span style="left:7px;top:0">All Ranges</span>
<svg width="10" height="7" style="left:188px;top:8px"><path d="M1 1L5 5L9 1" fill="none" stroke="#bbb" stroke-width="1.5"/></svg></div>
<div style="left:1589px;top:53px;width:11px;height:912px;background:#fff"></div>
<div style="left:1593px;top:57px;width:6px;height:905px;background:#c8c8c8;border-radius:3px"></div>

<div class="r b" style="top:54px"><span class="t">Selection</span><span class="s" style="left:188px;top:8px">320W</span><span class="d" style="left:14px">0:16:21</span><span class="d" style="left:70px">5,5<i>km</i></span><span class="d" style="left:113px">NP 321 <i>W</i></span><span class="s a" style="left:15px">Avg</span><span class="s a" style="left:38px">320W</span><span class="s a" style="left:70px">--bpm</span><span class="s a" style="left:102px">82rpm</span><span class="s m" style="left:13.5px">Max</span><span class="s m" style="left:38px">540W</span><span class="s m" style="left:70px">--bpm</span><span class="s m" style="left:102px">104rpm</span></div>
<div class="r" style="top:130.6px"><span class="t">Entire Workout</span><span class="s" style="left:188px;top:8px">206W</span><span class="d" style="left:14px">2:01:01</span><span class="d" style="left:70px">62,6<i>km</i></span><span class="d" style="left:120px">NP 237 <i>W</i></span><span class="s a" style="left:15px">Avg</span><span class="s a" style="left:38px">206W</span><span class="s a" style="left:78px">--bpm</span><span class="s a" style="left:110px">81rpm</span><span class="s m" style="left:13.5px">Max</span><span class="s m" style="left:38px">1 077W</span><span class="s m" style="left:78px">--bpm</span><span class="s m" style="left:110px">127rpm</span></div>
<div class="r" style="top:207.2px"><span class="t">Lap 1</span><span class="s" style="left:188px;top:8px">256W</span><span class="d" style="left:14px">0:06:34</span><span class="d" style="left:70px">2,5<i>km</i></span><span class="d" style="left:113px">NP 254 <i>W</i></span><span class="s a" style="left:15px">Avg</span><span class="s a" style="left:38px">256W</span><span class="s a" style="left:70px">--bpm</span><span class="s a" style="left:102px">84rpm</span><span class="s m" style="left:13.5px">Max</span><span class="s m" style="left:38px">644W</span><span class="s m" style="left:70px">--bpm</span><span class="s m" style="left:102px">121rpm</span></div>
<div class="r b" style="top:283.8px"><span class="t">Lap 2</span><span class="s" style="left:188px;top:8px">327W</span><span class="d" style="left:14px">0:07:13</span><span class="d" style="left:70px">2,4<i>km</i></span><span class="d" style="left:113px">NP 325 <i>W</i></span><span class="s a" style="left:15px">Avg</span><span class="s a" style="left:38px">327W</span><span class="s a" style="left:70px">--bpm</span><span class="s a" style="left:102px">82rpm</span><span class="s m" style="left:13.5px">Max</span><span class="s m" style="left:38px">479W</span><span class="s m" style="left:70px">--bpm</span><span class="s m" style="left:102px">101rpm</span></div>
<div class="r" style="top:360.4px"><span class="t">Lap 3</span><span class="s" style="left:188px;top:8px">243W</span><span class="d" style="left:14px">0:00:49</span><span class="d" style="left:70px">0,4<i>km</i></span><span class="d" style="left:113px">NP 273 <i>W</i></span><span class="s a" style="left:15px">Avg</span><span class="s a" style="left:38px">243W</span><span class="s a" style="left:70px">--bpm</span><span class="s a" style="left:102px">80rpm</span><span class="s m" style="left:13.5px">Max</span><span class="s m" style="left:38px">297W</span><span class="s m" style="left:70px">--bpm</span><span class="s m" style="left:102px">94rpm</span></div>
<div class="r b" style="top:437px"><span class="t">Lap 4</span><span class="s" style="left:188px;top:8px">329W</span><span class="d" style="left:14px">0:02:26</span><span class="d" style="left:70px">0,8<i>km</i></span><span class="d" style="left:113px">NP 322 <i>W</i></span><span class="s a" style="left:15px">Avg</span><span class="s a" style="left:38px">329W</span><span class="s a" style="left:70px">--bpm</span><span class="s a" style="left:102px">82rpm</span><span class="s m" style="left:13.5px">Max</span><span class="s m" style="left:38px">429W</span><span class="s m" style="left:70px">--bpm</span><span class="s m" style="left:102px">93rpm</span></div>
<div class="r" style="top:513.6px"><span class="t">Lap 5</span><span class="s" style="left:188px;top:8px">233W</span><span class="d" style="left:14px">0:00:32</span><span class="d" style="left:70px">0,2<i>km</i></span><span class="d" style="left:113px">NP 283 <i>W</i></span><span class="s a" style="left:15px">Avg</span><span class="s a" style="left:38px">233W</span><span class="s a" style="left:70px">--bpm</span><span class="s a" style="left:102px">82rpm</span><span class="s m" style="left:13.5px">Max</span><span class="s m" style="left:38px">296W</span><span class="s m" style="left:70px">--bpm</span><span class="s m" style="left:102px">92rpm</span></div>
<div class="r b" style="top:590.2px"><span class="t">Lap 6</span><span class="s" style="left:188px;top:8px">329W</span><span class="d" style="left:14px">0:05:17</span><span class="d" style="left:70px">1,6<i>km</i></span><span class="d" style="left:113px">NP 325 <i>W</i></span><span class="s a" style="left:15px">Avg</span><span class="s a" style="left:38px">329W</span><span class="s a" style="left:70px">--bpm</span><span class="s a" style="left:102px">84rpm</span><span class="s m" style="left:13.5px">Max</span><span class="s m" style="left:38px">540W</span><span class="s m" style="left:70px">--bpm</span><span class="s m" style="left:102px">104rpm</span></div>
<div class="r" style="top:666.8px"><span class="t">Lap 7</span><span class="s" style="left:188px;top:8px">251W</span><span class="d" style="left:14px">0:09:39</span><span class="d" style="left:70px">4,7<i>km</i></span><span class="d" style="left:113px">NP 249 <i>W</i></span><span class="s a" style="left:15px">Avg</span><span class="s a" style="left:38px">251W</span><span class="s a" style="left:70px">--bpm</span><span class="s a" style="left:102px">80rpm</span><span class="s m" style="left:13.5px">Max</span><span class="s m" style="left:38px">507W</span><span class="s m" style="left:70px">--bpm</span><span class="s m" style="left:102px">95rpm</span></div>
<div class="r" style="top:743.4px"><span class="t">Peak 0:00:05 Power</span><span class="s" style="left:188px;top:8px">800W</span><span class="d" style="left:14px">0:00:05</span><span class="d" style="left:70px">0,1<i>km</i></span><span class="d" style="left:113px">NP 266 <i>W</i></span><span class="s a" style="left:15px">Avg</span><span class="s a" style="left:38px">800W</span><span class="s a" style="left:78px">--bpm</span><span class="s a" style="left:110px">102rpm</span><span class="s m" style="left:13.5px">Max</span><span class="s m" style="left:38px">1 077W</span><span class="s m" style="left:78px">--bpm</span><span class="s m" style="left:110px">110rpm</span></div>
<div class="r" style="top:820px"><span class="t">Peak 0:00:10 Power</span><span class="s" style="left:188px;top:8px">523W</span><span class="d" style="left:14px">0:00:10</span><span class="d" style="left:70px">0,1<i>km</i></span><span class="d" style="left:113px">NP 248 <i>W</i></span><span class="s a" style="left:15px">Avg</span><span class="s a" style="left:38px">523W</span><span class="s a" style="left:78px">--bpm</span><span class="s a" style="left:110px">95rpm</span><span class="s m" style="left:13.5px">Max</span><span class="s m" style="left:38px">1 077W</span><span class="s m" style="left:78px">--bpm</span><span class="s m" style="left:110px">110rpm</span></div>
<div class="r" style="top:896.6px"><span class="t">Peak 0:00:20 Power</span><span class="s" style="left:188px;top:8px">419W</span><span class="d" style="left:14px">0:00:20</span><span class="d" style="left:70px">0,2<i>km</i></span><span class="d" style="left:113px">NP 379 <i>W</i></span><span class="s a" style="left:15px">Avg</span><span class="s a" style="left:38px">419W</span><span class="s a" style="left:70px">--bpm</span><span class="s a" style="left:102px">96rpm</span><span class="s m" style="left:13.5px">Max</span><span class="s m" style="left:38px">511W</span><span class="s m" style="left:70px">--bpm</span><span class="s m" style="left:102px">101rpm</span></div>

<div style="left:1375px;top:965px;width:225px;height:1px;background:#ddd"></div>
<div style="left:1375px;top:966px;width:225px;height:21px;background:#4d4d4d"></div>
<svg width="1600" height="987"><g fill="#bdbdbd"><rect x="1389" y="975.5" width="12" height="3"/><rect x="1393.5" y="971" width="3" height="12"/><rect x="1414" y="975.5" width="12" height="3"/></g></svg>
</div>
</body></html>
